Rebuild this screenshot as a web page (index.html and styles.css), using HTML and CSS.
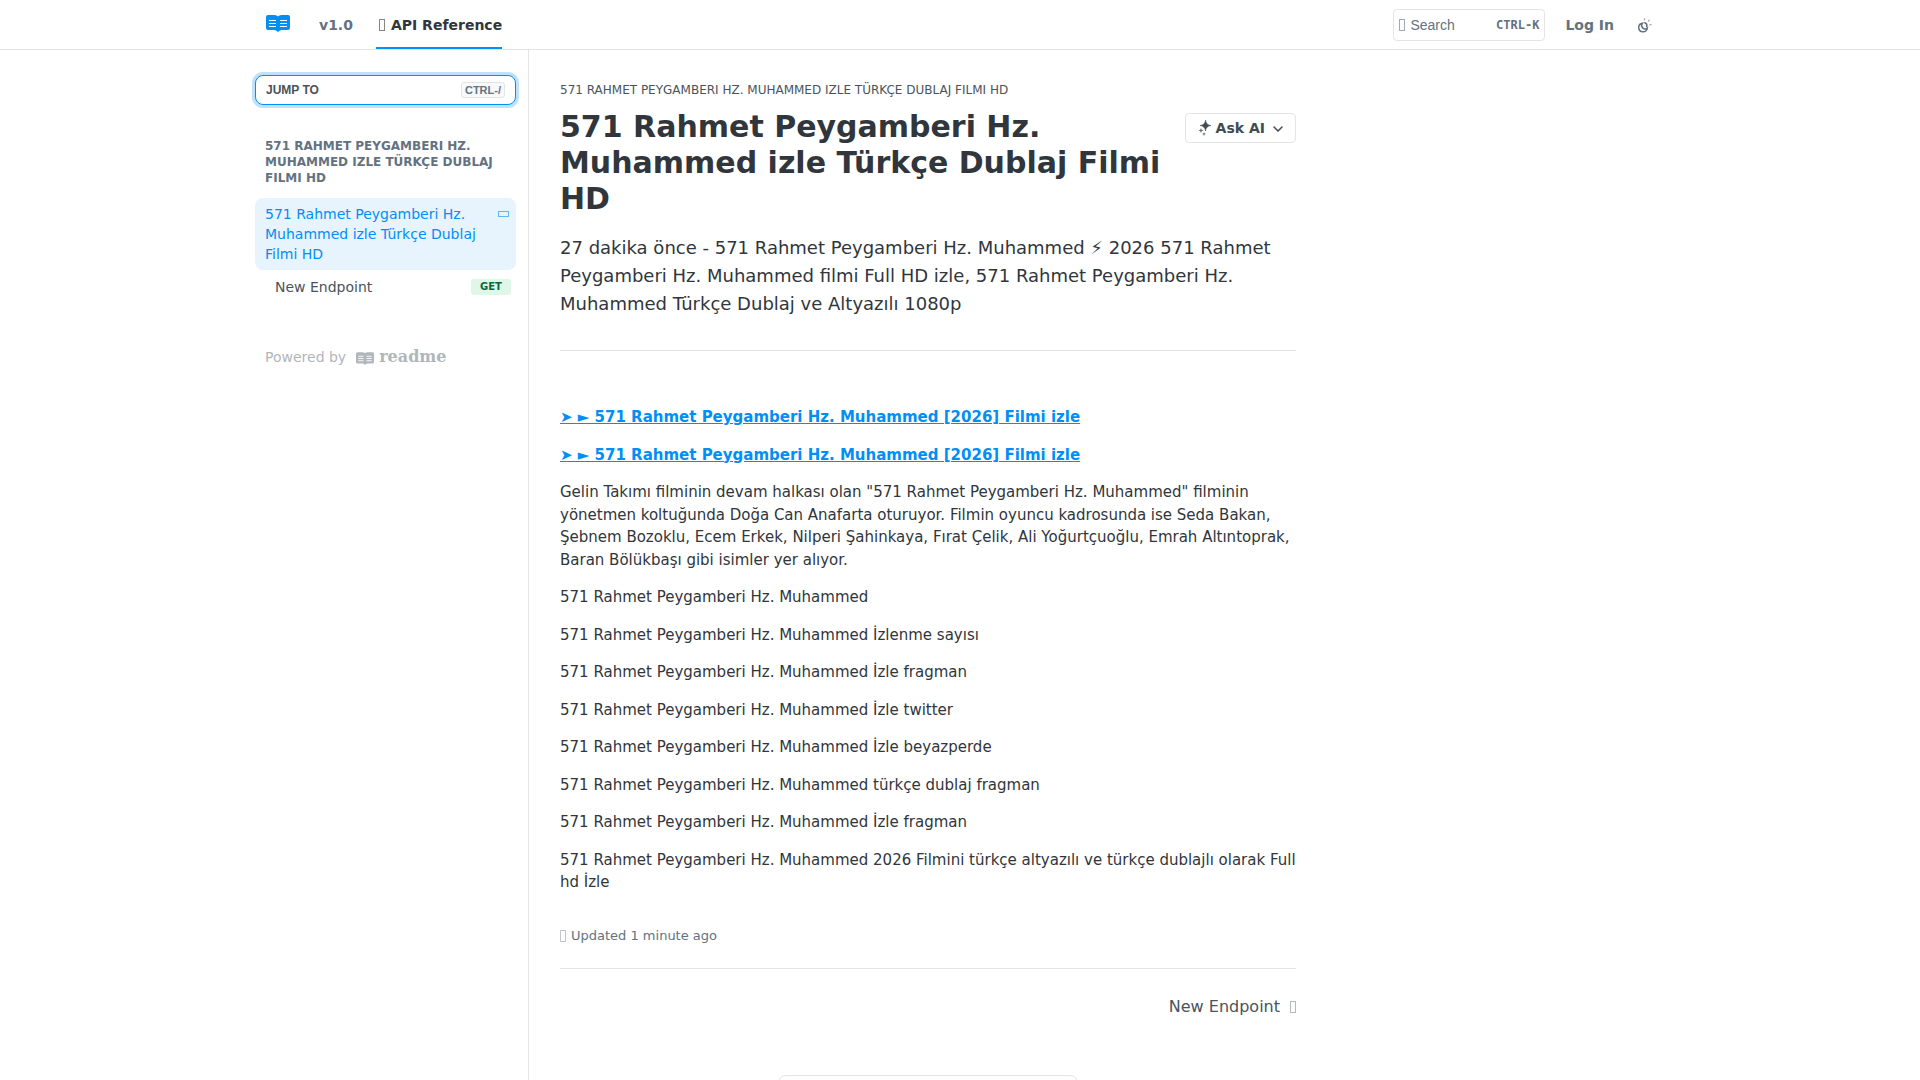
FILE: index.html
```html
<!DOCTYPE html>
<html lang="tr">

<head>
    <meta charset="UTF-8" />
    <meta name="viewport" content="width=device-width, initial-scale=1" />
    <title>571 Rahmet Peygamberi Hz. Muhammed izle Türkçe Dublaj Filmi HD</title>
    <link rel="stylesheet" href="styles.css">
</head>

<body>
    <svg class="symbols" aria-hidden="true">
        <symbol id="book" viewBox="0 0 24 17">
            <path fill="currentColor" d="M2 0h6.500Q11 0 12 1.500 13 0 15.500 0H22q2 0 2 2v11q0 2-2 2h-6q-2.500 0-3.300 1.500-.7.900-1.400 0Q10.500 15 8 15H2q-2 0-2-2V2Q0 0 2 0z" />
            <path stroke="#fff" stroke-width="1.200" d="M3 5.500h7M3 8.500h7M3 11.500h7M14 5.500h7M14 8.500h7M14 11.500h7" />
        </symbol>
    </svg>
    <header class="header">
        <div class="container header-row">
            <nav class="header-nav">
                <a class="logo" href="#" aria-label="Home"><svg width="24" height="17"><use href="#book" /></svg></a>
                <a class="version" href="#">v1.0</a>
                <a class="tab" href="#"><i class="glyph"></i>API Reference</a>
            </nav>
            <div class="header-tools">
                <button class="search" type="button">
                    <i class="glyph"></i>
                    <span>Search</span>
                    <kbd>CTRL-K</kbd>
                </button>
                <a class="login" href="#">Log In</a>
                <button class="theme" type="button" aria-label="Toggle theme">
                    <svg width="16" height="16" viewBox="0 0 16 16" fill="none" stroke="currentColor" stroke-linecap="round">
                        <path stroke-width="1.500" d="M5.500 6.200A4.300 4.300 0 1 0 10.300 11 3.400 3.400 0 0 1 5.500 6.200z" />
                        <path stroke-width="1.500" d="M7.800 5.800a3 3 0 0 1 1.900 3.700" />
                        <path stroke-width="1.500" opacity=".55" d="M7.500 1.800v1M11.500 4l.7-.7M13 7.800h1" />
                    </svg>
                </button>
            </div>
        </div>
    </header>
    <div class="container layout">
        <aside class="sidebar">
            <button class="jump" type="button">JUMP TO <kbd>CTRL-/</kbd></button>
            <h2 class="sidebar-title">571 RAHMET PEYGAMBERI HZ. MUHAMMED IZLE TÜRKÇE DUBLAJ FILMI HD</h2>
            <ul class="sidebar-list">
                <li>
                    <a class="page active" href="#"><span>571 Rahmet Peygamberi Hz. Muhammed izle Türkçe Dublaj Filmi HD</span><i class="glyph glyph-wide"></i></a>
                </li>
                <li>
                    <a class="page sub" href="#"><span>New Endpoint</span><b class="method">GET</b></a>
                </li>
            </ul>
            <a class="powered" href="#">Powered by
                <svg width="18" height="13"><use href="#book" /></svg>
                <b class="wordmark">readme</b>
            </a>
        </aside>
        <main class="content">
            <div class="crumb">571 RAHMET PEYGAMBERI HZ. MUHAMMED IZLE TÜRKÇE DUBLAJ FILMI HD</div>
            <div class="heading">
                <h1>571 Rahmet Peygamberi Hz. Muhammed izle Türkçe Dublaj Filmi HD</h1>
                <button class="ask" type="button">
                    <svg width="14" height="16" viewBox="0 0 14 16" fill="currentColor">
                        <path d="M7.500 0Q8 5 13 5.500 8 6 7.500 11 7 6 2 5.500 7 5 7.500 0z" stroke="currentColor" stroke-width=".5" />
                        <path opacity=".8" d="M3 8q.2 2.300 2.500 2.500Q3.200 10.700 3 13q-.2-2.300-2.500-2.500Q2.800 10.300 3 8zM6 12q.2 1.800 2 2-1.800.2-2 2-.2-1.800-2-2 1.800-.2 2-2z" />
                    </svg>
                    Ask AI
                    <svg class="chevron" width="10" height="6" viewBox="0 0 10 6" fill="none" stroke="currentColor" stroke-width="1.500" stroke-linecap="round">
                        <path d="M1 1l4 4 4-4" />
                    </svg>
                </button>
            </div>
            <p class="excerpt">27 dakika önce - 571 Rahmet Peygamberi Hz. Muhammed ⚡ 2026 571 Rahmet Peygamberi Hz. Muhammed filmi Full HD izle, 571 Rahmet Peygamberi Hz. Muhammed Türkçe Dublaj ve Altyazılı 1080p</p>
            <article class="markdown">
                <p><a href="#">➤ ► 571 Rahmet Peygamberi Hz. Muhammed [2026] Filmi izle</a></p>
                <p><a href="#">➤ ► 571 Rahmet Peygamberi Hz. Muhammed [2026] Filmi izle</a></p>
                <p>Gelin Takımı filminin devam halkası olan "571 Rahmet Peygamberi Hz. Muhammed" filminin yönetmen koltuğunda Doğa Can Anafarta oturuyor. Filmin oyuncu kadrosunda ise Seda Bakan, Şebnem Bozoklu, Ecem Erkek, Nilperi Şahinkaya, Fırat Çelik, Ali Yoğurtçuoğlu, Emrah Altıntoprak, Baran Bölükbaşı gibi isimler yer alıyor.</p>
                <p>571 Rahmet Peygamberi Hz. Muhammed</p>
                <p>571 Rahmet Peygamberi Hz. Muhammed İzlenme sayısı</p>
                <p>571 Rahmet Peygamberi Hz. Muhammed İzle fragman</p>
                <p>571 Rahmet Peygamberi Hz. Muhammed İzle twitter</p>
                <p>571 Rahmet Peygamberi Hz. Muhammed İzle beyazperde</p>
                <p>571 Rahmet Peygamberi Hz. Muhammed türkçe dublaj fragman</p>
                <p>571 Rahmet Peygamberi Hz. Muhammed İzle fragman</p>
                <p>571 Rahmet Peygamberi Hz. Muhammed 2026 Filmini türkçe altyazılı ve türkçe dublajlı olarak Full hd İzle</p>
            </article>
            <div class="updated"><i class="glyph"></i>Updated 1 minute ago</div>
            <nav class="pager">
                <a href="#">New Endpoint<i class="glyph"></i></a>
            </nav>
            <div class="dock">
                <div class="dock-box"></div>
            </div>
        </main>
    </div>
</body>

</html>
```
FILE: styles.css
```css
* {
    box-sizing: border-box;
}

body {
    margin: 0;
    font-family: "DejaVu Sans", sans-serif;
    font-size: 14px;
    line-height: 20px;
    color: #30363b;
    background-color: #fff;
}

a {
    color: inherit;
    text-decoration: none;
}

button {
    margin: 0;
    font: inherit;
    color: inherit;
    background-color: #fff;
    border: 1px solid #e3e4e6;
    border-radius: 4px;
    cursor: pointer;
}

.symbols {
    display: none;
}

.container {
    max-width: 1440px;
    margin: 0 auto;
}

/* empty icon boxes */
.glyph {
    flex: none;
    width: 6px;
    height: 12px;
    border: 1px solid currentColor;
    opacity: .6;
}

.glyph-wide {
    width: 11px;
    height: 6px;
}

/* header */
.header {
    height: 50px;
    border-bottom: 1px solid #e3e4e6;
    font-weight: bold;
    color: #637281;
}

.header-row,
.header-nav,
.header-tools {
    display: flex;
    align-items: center;
    height: 49px;
}

.header-row {
    justify-content: space-between;
    padding: 0 27px 0 26px;
}

.logo {
    display: flex;
    margin: 0 29px 2px 0;
    color: #018ef5;
}

.version {
    margin-right: 23px;
}

.tab {
    display: flex;
    align-items: center;
    gap: 6px;
    height: 49px;
    padding-left: 3px;
    border-bottom: 2px solid #018ef5;
    padding-top: 2px;
    color: #30363b;
}

.search {
    display: flex;
    align-items: center;
    width: 152px;
    height: 32px;
    margin-right: 20px;
    padding: 0 5px;
    font: 14px/20px "Liberation Sans", sans-serif;
}

.search span {
    margin-left: 5px;
}

.search kbd {
    margin-left: auto;
    font: bold 12px/16px "DejaVu Sans Mono", monospace;
}

.theme {
    display: flex;
    margin-left: 23px;
    padding: 0;
    border: 0;
}

/* columns */
.layout {
    display: flex;
    min-height: calc(100vh - 50px);
}

.sidebar {
    flex: none;
    width: 289px;
    padding: 25px 12px 0 15px;
    border-right: 1px solid #e3e4e6;
}

.jump {
    display: flex;
    align-items: center;
    justify-content: space-between;
    width: 100%;
    height: 30px;
    padding: 0 10px;
    border-color: #018ef5;
    border-radius: 8px;
    box-shadow: 0 0 0 3px #bfe2fc;
    font: bold 12px/16px "Liberation Sans", sans-serif;
    color: #4a535b;
}

.jump kbd {
    padding: 0 3px;
    border: 1px solid #e3e4e6;
    border-radius: 3px;
    background-color: #f8f9fa;
    font: bold 11px/14px "Liberation Sans", sans-serif;
    color: #637281;
}

.sidebar-title {
    margin: 33px 10px 12px;
    font-size: 12px;
    line-height: 16px;
    color: #637281;
}

.sidebar-list {
    display: grid;
    gap: 1px;
    margin: 0;
    padding: 0;
    list-style: none;
}

.page {
    display: flex;
    justify-content: space-between;
    padding: 6px 5px 6px 10px;
    border-radius: 8px;
    color: #4a535b;
}

.active {
    gap: 16px;
    background-color: #e7f4fe;
    color: #018ef5;
}

.active .glyph {
    margin: 7px 2px;
}

.sub {
    align-items: center;
    padding-left: 20px;
}

.method {
    width: 40px;
    border-radius: 3px;
    background-color: #dff6e9;
    font-size: 10px;
    line-height: 16px;
    text-align: center;
    color: #036b3b;
}

.powered {
    display: flex;
    align-items: center;
    margin: 44px 10px;
    color: #b1b6bb;
}

.powered svg {
    margin: 2px 5px 0 10px;
}

.wordmark {
    font-family: "DejaVu Serif", serif;
    font-size: 16px;
}

.content {
    flex: 1;
    min-width: 0;
    max-width: 799px;
    padding: 30px 32px 0 31px;
}

.crumb {
    font-size: 12px;
    color: #4a535b;
}

.heading {
    display: flex;
    justify-content: space-between;
    align-items: flex-start;
    gap: 16px;
    margin-top: 9px;
}

h1 {
    margin: 0;
    font-size: 30px;
    line-height: 36px;
}

.ask {
    display: flex;
    flex: none;
    align-items: center;
    height: 30px;
    margin-top: 4px;
    padding: 0 12px;
    font-weight: bold;
    color: #414b54;
}

.ask svg {
    margin-right: 4px;
}

.ask .chevron {
    margin: 2px 0 0 8px;
}

.excerpt {
    margin: 17px 0 0;
    padding-bottom: 32px;
    border-bottom: 1px solid #e3e4e6;
    font-size: 18px;
    line-height: 28px;
}

.markdown {
    margin-top: 55px;
    font-size: 15px;
    line-height: 1.5;
}

.markdown p {
    margin: 0 0 15px;
}

.markdown a {
    font-weight: bold;
    color: #018ef5;
    text-decoration: underline;
}

.updated {
    display: flex;
    align-items: center;
    gap: 5px;
    margin-top: 32px;
    padding-bottom: 22px;
    border-bottom: 1px solid #e3e4e6;
    font-size: 13px;
    color: #637281;
}

.updated .glyph,
.pager .glyph {
    opacity: .4;
}

.pager {
    display: flex;
    justify-content: flex-end;
    margin-top: 28px;
    font-size: 16px;
    color: #4a535b;
}

.pager a {
    display: flex;
    align-items: center;
    gap: 10px;
}

/* docked panel, only its top edge is on screen */
.dock {
    display: flex;
    justify-content: center;
}

.dock-box {
    position: fixed;
    bottom: -43px;
    width: 300px;
    height: 48px;
    border: 1px solid #e3e4e6;
    border-radius: 8px;
    background-color: #fff;
}
```
